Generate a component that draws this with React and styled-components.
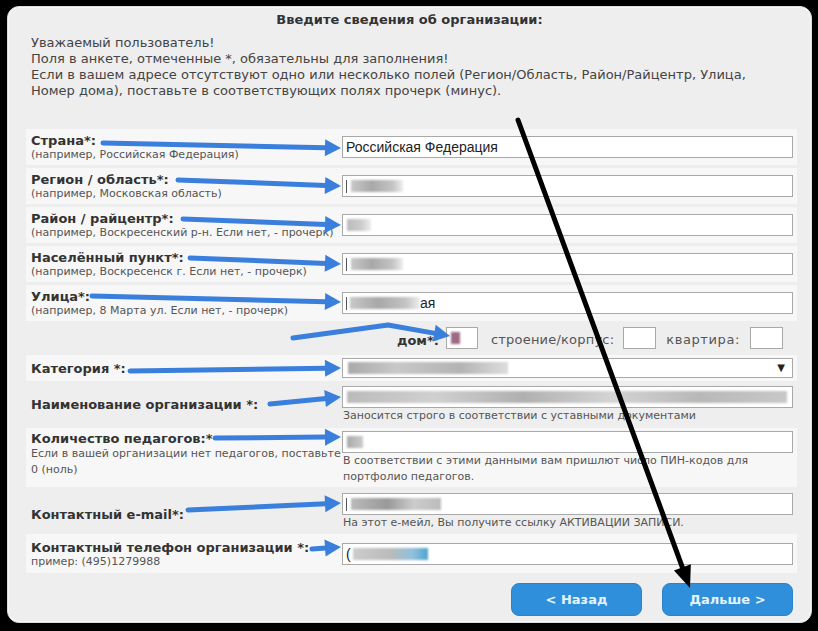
import React from "react";
import styled, { createGlobalStyle } from "styled-components";

const Global = createGlobalStyle`
  html, body { margin: 0; padding: 0; background: #000; }
  body { font-family: "DejaVu Sans", Verdana, sans-serif; color: #333; }
  * { box-sizing: border-box; }
`;

const Page = styled.div`
  position: relative;
  width: 818px;
  height: 631px;
  padding: 6px 6px 0 7px;
`;

const Panel = styled.div`
  width: 805px;
  height: 617px;
  background: #eeeeee;
  border: 1px solid #dcdcdc;
  box-shadow: inset 0 0 0 1px #f8f8f8;
  border-radius: 12px;
  padding-top: 5px;
  display: flex;
  flex-direction: column;
`;

const Title = styled.div`
  font-size: 13px;
  line-height: 16px;
  font-weight: bold;
  text-align: center;
  color: #333;
`;

const Intro = styled.div`
  margin-top: 7px;
  padding-left: 23px;
  font-size: 13px;
  line-height: 16px;
  color: #444;
`;

const Form = styled.div`
  margin: 30px 0 0 18px;
  width: 771px;
  display: flex;
  flex-direction: column;
  gap: 3px;
`;

const Row = styled.div`
  display: grid;
  grid-template-columns: 311px 451px;
  align-items: ${(p) => (p.$top ? "start" : "center")};
  min-height: ${(p) => p.$h}px;
  padding: ${(p) => (p.$pt ? `${p.$pt}px` : "0")} 4px 0 5px;
  background: ${(p) => (p.$plain ? "transparent" : "#f7f7f7")};
`;

const Label = styled.div`
  display: flex;
  flex-direction: column;
  padding-top: ${(p) => (p.$pt ? p.$pt : 0)}px;
`;

const LabelMain = styled.span`
  font-size: 13px;
  line-height: 15px;
  font-weight: bold;
  color: #333;
`;

const LabelSub = styled.span`
  font-size: 11px;
  line-height: ${(p) => (p.$lh ? p.$lh : 13)}px;
  color: #555;
`;

const Field = styled.div`
  display: flex;
  flex-direction: column;
`;

const Input = styled.div`
  height: ${(p) => (p.$h ? p.$h : 22)}px;
  width: ${(p) => (p.$w ? `${p.$w}px` : "100%")};
  background: #fff;
  border: 1px solid #a9a9a9;
  display: flex;
  align-items: center;
  padding-left: 3px;
  font-family: "Liberation Sans", Arial, sans-serif;
  font-size: 14px;
  color: #222;
  position: relative;
  overflow: hidden;
  white-space: nowrap;
`;

const Blur = styled.span`
  display: inline-block;
  width: ${(p) => p.$w}px;
  height: 12px;
  margin-left: ${(p) => (p.$ml ? p.$ml : 0)}px;
  background: ${(p) => p.$bg || "linear-gradient(90deg, #c8c8c8, #a8a8a8 40%, #c4c4c4 80%, #eee)"};
  filter: blur(1.2px);
`;

const Caret = styled.span`
  display: inline-block;
  width: 1px;
  height: 13px;
  background: #555;
`;

const Hint = styled.div`
  font-size: 11px;
  line-height: 16px;
  color: #555;
  padding-left: 1px;
`;

const SelectArrow = styled.span`
  position: absolute;
  right: 7px;
  top: 3px;
  font-size: 10px;
  color: #222;
  font-family: "DejaVu Sans", sans-serif;
`;

const HouseRow = styled.div`
  display: flex;
  align-items: center;
  justify-content: flex-end;
  height: 28px;
  padding-right: 14px;
  font-size: 13px;
  color: #555;
`;

const HouseLabel = styled.span`
  font-weight: ${(p) => (p.$bold ? "bold" : "normal")};
  color: ${(p) => (p.$bold ? "#333" : "#555")};
  margin: 0 ${(p) => p.$mr}px 0 ${(p) => p.$ml}px;
  position: relative;
  top: ${(p) => (p.$bold ? 2 : 1)}px;
  letter-spacing: ${(p) => (p.$ls ? p.$ls : 0)}px;
`;

const Buttons = styled.div`
  display: flex;
  justify-content: flex-end;
  gap: 20px;
  padding-right: 4px;
  margin-top: 7px;
`;

const Button = styled.button`
  width: 131px;
  height: 33px;
  border: 1px solid #2a84cc;
  border-radius: 8px;
  background: #2f8fdb;
  color: #e4f3ff;
  font-family: "DejaVu Sans", Verdana, sans-serif;
  font-size: 13px;
  font-weight: bold;
  cursor: pointer;
`;

const Overlay = styled.svg`
  position: absolute;
  left: 0;
  top: 0;
  pointer-events: none;
`;

function Arrow({ pts, color, w, hl, hw }) {
  const n = pts.length;
  const [x1, y1] = pts[n - 2];
  const [x2, y2] = pts[n - 1];
  const dx = x2 - x1;
  const dy = y2 - y1;
  const len = Math.hypot(dx, dy);
  const ux = dx / len;
  const uy = dy / len;
  const bx = x2 - ux * hl;
  const by = y2 - uy * hl;
  const px = -uy * (hw / 2);
  const py = ux * (hw / 2);
  const linePts = pts
    .slice(0, n - 1)
    .concat([[bx + ux * 1, by + uy * 1]])
    .map((p) => p.join(","))
    .join(" ");
  return (
    <g>
      <polyline points={linePts} fill="none" stroke={color} strokeWidth={w} strokeLinejoin="round" strokeLinecap="round" />
      <polygon points={`${x2},${y2} ${bx + px},${by + py} ${bx - px},${by - py}`} fill={color} />
    </g>
  );
}

const blue = "#3b7fdc";
const blueArrows = [
  [[103, 143], [341, 148]],
  [[178, 180], [341, 186]],
  [[183, 219], [341, 225]],
  [[190, 258], [341, 264]],
  [[92, 296], [341, 302]],
  [[293, 338], [388, 325], [450, 336]],
  [[130, 371], [341, 368]],
  [[270, 404], [341, 397]],
  [[215, 438], [341, 437]],
  [[188, 510], [341, 503]],
  [[312, 549], [341, 547]],
];

export default function App() {
  return (
    <Page>
      <Global />
      <Panel>
        <Title>Введите сведения об организации:</Title>
        <Intro>
          Уважаемый пользователь!
          <br />
          Поля в анкете, отмеченные *, обязательны для заполнения!
          <br />
          Если в вашем адресе отсутствуют одно или несколько полей (Регион/Область, Район/Райцентр, Улица,
          <br />
          Номер дома), поставьте в соответствующих полях прочерк (минус).
        </Intro>
        <Form>
          <Row $h={36}>
            <Label>
              <LabelMain>Страна*:</LabelMain>
              <LabelSub>(например, Российская Федерация)</LabelSub>
            </Label>
            <Field>
              <Input>Российская Федерация</Input>
            </Field>
          </Row>
          <Row $h={36}>
            <Label>
              <LabelMain>Регион / область*:</LabelMain>
              <LabelSub>(например, Московская область)</LabelSub>
            </Label>
            <Field>
              <Input>
                <Caret />
                <Blur $w={52} $ml={4} />
              </Input>
            </Field>
          </Row>
          <Row $h={36}>
            <Label>
              <LabelMain>Район / райцентр*:</LabelMain>
              <LabelSub>(например, Воскресенский р-н. Если нет, - прочерк)</LabelSub>
            </Label>
            <Field>
              <Input>
                <Blur $w={24} $ml={1} $bg="linear-gradient(90deg,#bbb,#ccc 60%,#eee)" />
              </Input>
            </Field>
          </Row>
          <Row $h={36}>
            <Label>
              <LabelMain>Населённый пункт*:</LabelMain>
              <LabelSub>(например, Воскресенск г. Если нет, - прочерк)</LabelSub>
            </Label>
            <Field>
              <Input>
                <Caret />
                <Blur $w={52} $ml={4} />
              </Input>
            </Field>
          </Row>
          <Row $h={36}>
            <Label>
              <LabelMain>Улица*:</LabelMain>
              <LabelSub>(например, 8 Марта ул. Если нет, - прочерк)</LabelSub>
            </Label>
            <Field>
              <Input>
                <Caret />
                <Blur $w={70} $ml={3} />
                ая
              </Input>
            </Field>
          </Row>
          <HouseRow>
            <HouseLabel $bold $ml={0} $mr={7}>
              дом*:
            </HouseLabel>
            <Input $w={32}>
              <Blur $w={9} $ml={1} $bg="#9c6a82" />
            </Input>
            <HouseLabel $ml={13} $mr={9} $ls={0.2}>
              строение/корпус:
            </HouseLabel>
            <Input $w={33} />
            <HouseLabel $ml={10} $mr={10} $ls={0.6}>
              квартира:
            </HouseLabel>
            <Input $w={33} />
          </HouseRow>
          <Row $h={26}>
            <Label>
              <LabelMain>Категория *:</LabelMain>
            </Label>
            <Field>
              <Input $h={20}>
                <Blur $w={160} $ml={2} $bg="linear-gradient(90deg,#aaa,#c8c8c8 30%,#b4b4b4 70%,#ddd)" />
                <SelectArrow>▼</SelectArrow>
              </Input>
            </Field>
          </Row>
          <Row $h={41} $plain>
            <Label>
              <LabelMain>Наименование организации *:</LabelMain>
            </Label>
            <Field>
              <Input>
                <Blur $w={440} $ml={1} $bg="linear-gradient(90deg,#bbb,#d0d0d0 20%,#b0b0b0 40%,#d4d4d4 60%,#b8b8b8 80%,#c8c8c8)" />
              </Input>
              <Hint>Заносится строго в соответствии с уставными документами</Hint>
            </Field>
          </Row>
          <Row $h={59} $top $pt={3}>
            <Label>
              <LabelMain>Количество педагогов:*</LabelMain>
              <LabelSub $lh={16}>
                Если в вашей организации нет педагогов, поставьте
                <br />0 (ноль)
              </LabelSub>
            </Label>
            <Field>
              <Input>
                <Blur $w={16} $ml={1} $bg="linear-gradient(90deg,#aaa,#ccc)" />
              </Input>
              <Hint>
                В соответствии с этими данными вам пришлют число ПИН-кодов для
                <br />
                портфолио педагогов.
              </Hint>
            </Field>
          </Row>
          <Row $h={41} $plain $top $pt={3}>
            <Label $pt={14}>
              <LabelMain>Контактный e-mail*:</LabelMain>
            </Label>
            <Field>
              <Input>
                <Caret />
                <Blur $w={90} $ml={4} $bg="linear-gradient(90deg,#bbb,#999 40%,#ccc 70%,#bbb)" />
              </Input>
              <Hint>На этот е-мейл, Вы получите ссылку АКТИВАЦИИ ЗАПИСИ.</Hint>
            </Field>
          </Row>
          <Row $h={39}>
            <Label>
              <LabelMain>Контактный телефон организации *:</LabelMain>
              <LabelSub>пример: (495)1279988</LabelSub>
            </Label>
            <Field>
              <Input>
                (
                <Blur $w={75} $ml={2} $bg="linear-gradient(90deg,#ccc,#bbb 50%,#8fc0dc 80%,#4fa3cf)" />
              </Input>
            </Field>
          </Row>
          <Buttons>
            <Button>&lt; Назад</Button>
            <Button>Дальше &gt;</Button>
          </Buttons>
        </Form>
      </Panel>
      <Overlay width="818" height="631" viewBox="0 0 818 631">
        {blueArrows.map((pts, i) => (
          <Arrow key={i} pts={pts} color={blue} w={5} hl={16} hw={17} />
        ))}
        <Arrow pts={[[518, 120], [690, 588]]} color="#000" w={5} hl={22} hw={18} />
      </Overlay>
    </Page>
  );
}
